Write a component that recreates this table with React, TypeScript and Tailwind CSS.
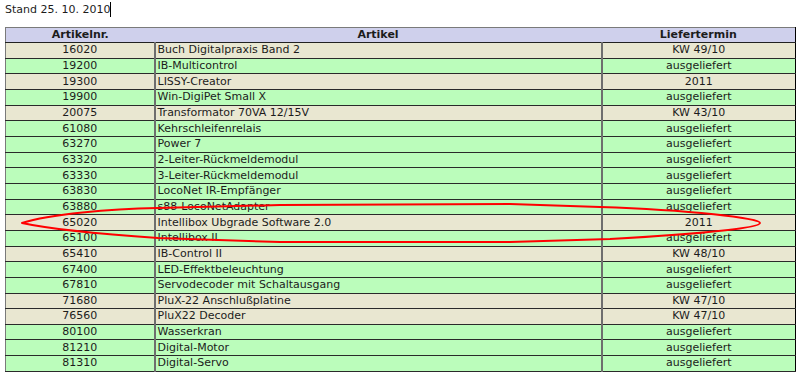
import React from 'react';

type Row = { nr: string; artikel: string; termin: string };

const rows: Row[] = [
  { nr: '16020', artikel: 'Buch Digitalpraxis Band 2', termin: 'KW 49/10' },
  { nr: '19200', artikel: 'IB-Multicontrol', termin: 'ausgeliefert' },
  { nr: '19300', artikel: 'LISSY-Creator', termin: '2011' },
  { nr: '19900', artikel: 'Win-DigiPet Small X', termin: 'ausgeliefert' },
  { nr: '20075', artikel: 'Transformator 70VA 12/15V', termin: 'KW 43/10' },
  { nr: '61080', artikel: 'Kehrschleifenrelais', termin: 'ausgeliefert' },
  { nr: '63270', artikel: 'Power 7', termin: 'ausgeliefert' },
  { nr: '63320', artikel: '2-Leiter-Rückmeldemodul', termin: 'ausgeliefert' },
  { nr: '63330', artikel: '3-Leiter-Rückmeldemodul', termin: 'ausgeliefert' },
  { nr: '63830', artikel: 'LocoNet IR-Empfänger', termin: 'ausgeliefert' },
  { nr: '63880', artikel: 's88-LocoNetAdapter', termin: 'ausgeliefert' },
  { nr: '65020', artikel: 'Intellibox Ubgrade Software 2.0', termin: '2011' },
  { nr: '65100', artikel: 'Intellibox II', termin: 'ausgeliefert' },
  { nr: '65410', artikel: 'IB-Control II', termin: 'KW 48/10' },
  { nr: '67400', artikel: 'LED-Effektbeleuchtung', termin: 'ausgeliefert' },
  { nr: '67810', artikel: 'Servodecoder mit Schaltausgang', termin: 'ausgeliefert' },
  { nr: '71680', artikel: 'PluX-22 Anschlußplatine', termin: 'KW 47/10' },
  { nr: '76560', artikel: 'PluX22 Decoder', termin: 'KW 47/10' },
  { nr: '80100', artikel: 'Wasserkran', termin: 'ausgeliefert' },
  { nr: '81210', artikel: 'Digital-Motor', termin: 'ausgeliefert' },
  { nr: '81310', artikel: 'Digital-Servo', termin: 'ausgeliefert' },
];

export default function App() {
  return (
    <div className="relative w-[800px] h-[376px] bg-white text-[11px] leading-[14px] text-[#1c1c1c] font-['DejaVu_Sans','Verdana',sans-serif] overflow-hidden">
      {/* Stand */}
      <div className="px-[5px] pt-[3px] h-[27px] flex items-start">
        <span>Stand 25. 10. 2010</span>
        <span className="inline-block w-px h-[15px] bg-black -mt-[1px]" />
      </div>

      {/* Table */}
      <table className="ml-[5px] w-[790px] table-fixed border-collapse border border-t-[#7a7a7a] border-l-[#7a7a7a] border-r-black border-b-black">
        <colgroup>
          <col className="w-[149px]" />
          <col className="w-[447px]" />
          <col className="w-[194px]" />
        </colgroup>
        <thead>
          <tr className="bg-[#cfd0ec] h-[15px]">
            <th className="font-bold text-center p-0 border-b border-b-[#222]">Artikelnr.</th>
            <th className="font-bold text-center p-0 border-b border-b-[#222]">Artikel</th>
            <th className="font-bold text-center p-0 border-b border-b-[#222]">Liefertermin</th>
          </tr>
        </thead>
        <tbody>
          {rows.map((r) => {
            const done = r.termin === 'ausgeliefert';
            return (
              <tr key={r.nr} className={done ? 'bg-[#bbfdbb] h-[15.67px]' : 'bg-[#e9e7d1] h-[15.67px]'}>
                <td className="p-0 text-center border-b border-b-[#2a2a2a] border-r-2 border-r-[#6e6e6e]">{r.nr}</td>
                <td className="p-0 pl-[2px] text-left border-b border-b-[#2a2a2a] border-r-2 border-r-[#6e6e6e] whitespace-nowrap">{r.artikel}</td>
                <td className="p-0 text-center border-b border-b-[#2a2a2a]">{r.termin}</td>
              </tr>
            );
          })}
        </tbody>
      </table>

      {/* hand drawn red mark */}
      <svg className="absolute left-0 top-0 pointer-events-none" width="800" height="376" viewBox="0 0 800 376">
        <path
          d="M22 223 C 50 214, 110 209, 158 208 L 280 205 L 510 204 L 600 207 C 690 210, 760 218, 760 223 C 760 228, 700 234, 610 239 L 510 242 L 280 242 L 158 238 C 100 234, 45 228, 22 223 Z"
          fill="none"
          stroke="#ff0000"
          strokeWidth="2"
          strokeLinejoin="round"
        />
      </svg>
    </div>
  );
}
